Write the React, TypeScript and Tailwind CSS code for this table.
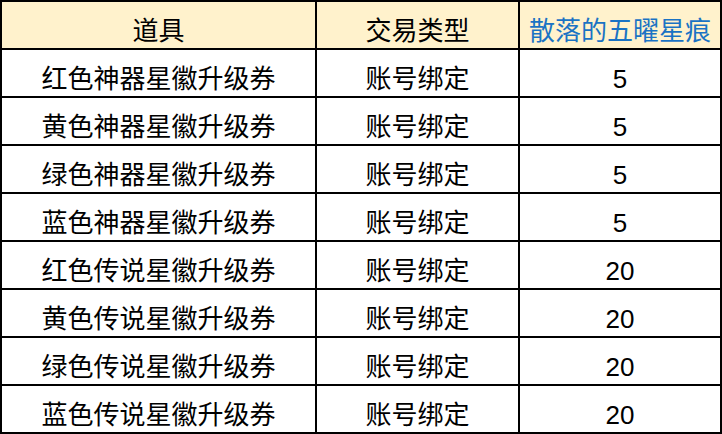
const rows = [
  { item: "红色神器星徽升级券", trade: "账号绑定", count: 5 },
  { item: "黄色神器星徽升级券", trade: "账号绑定", count: 5 },
  { item: "绿色神器星徽升级券", trade: "账号绑定", count: 5 },
  { item: "蓝色神器星徽升级券", trade: "账号绑定", count: 5 },
  { item: "红色传说星徽升级券", trade: "账号绑定", count: 20 },
  { item: "黄色传说星徽升级券", trade: "账号绑定", count: 20 },
  { item: "绿色传说星徽升级券", trade: "账号绑定", count: 20 },
  { item: "蓝色传说星徽升级券", trade: "账号绑定", count: 20 },
];

// text in the source sits a bit below the cell centre
const cell = "flex items-center justify-center bg-white pt-3";
const head = "flex items-center justify-center bg-[#fff2cc] pt-3";

export default function App() {
  return (
    <div
      className="grid w-[722px] grid-cols-[313px_201px_200px] auto-rows-[46px] gap-[2px] bg-black p-[2px] text-[26px] leading-none text-black"
      style={{ fontFamily: '"Liberation Sans", "Noto Sans CJK SC", sans-serif' }}
    >
      <div className={head}>道具</div>
      <div className={head}>交易类型</div>
      <div className={`${head} text-[#1a73c4]`}>散落的五曜星痕</div>
      {rows.map((r, i) => (
        <div key={i} className="contents">
          <div className={cell}>{r.item}</div>
          <div className={cell}>{r.trade}</div>
          <div className={cell}>{r.count}</div>
        </div>
      ))}
    </div>
  );
}
